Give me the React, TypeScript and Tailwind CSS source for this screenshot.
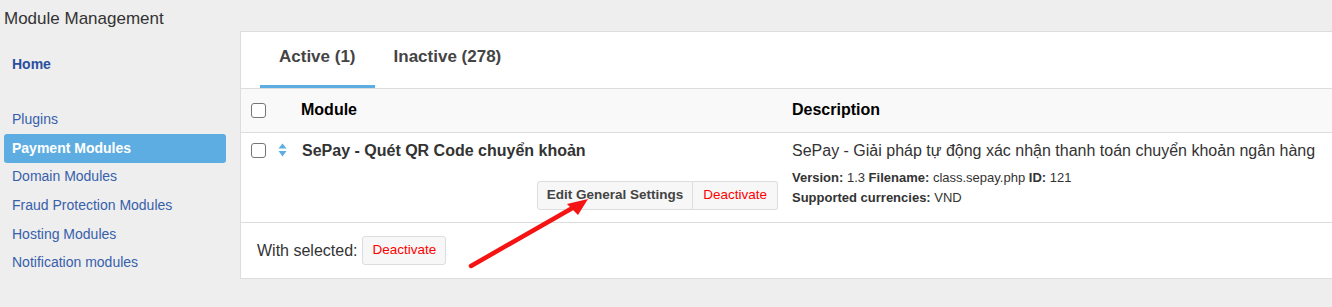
import React from "react";

function Checkbox() {
  return <span className="block w-[15px] h-[15px] rounded-[3px] border border-[#767676] bg-white" />;
}

function SortIcon() {
  return (
    <svg width="9" height="14" viewBox="0 0 9 14" className="block">
      <path d="M4.5 0.5 L8.5 5.5 L0.5 5.5 Z" fill="#5dade2" />
      <path d="M0.5 8 L8.5 8 L4.5 13.5 Z" fill="#5dade2" />
    </svg>
  );
}

const sideItems = [
  "Plugins",
  "Payment Modules",
  "Domain Modules",
  "Fraud Protection Modules",
  "Hosting Modules",
  "Notification modules",
];

export default function App() {
  return (
    <div
      className="relative w-[1332px] h-[307px] overflow-hidden bg-[#eeeeee] text-[#333333]"
      style={{ fontFamily: '"Liberation Sans", Arial, sans-serif' }}
    >
      <div className="pt-[8px] pl-[4px] text-[17px] leading-[22px] text-[#333333]">Module Management</div>
      <div className="flex mt-[1px]">
        {/* Sidebar */}
        <div className="w-[240px] flex-none pl-[4px] pr-[14px] pt-[19px] text-[14px]">
          <div className="h-[29px] flex items-center px-[8px] font-bold text-[#2b4f9e]">Home</div>
          <div className="h-[26px]" />
          {sideItems.map((it) => (
            <div
              key={it}
              className={
                it === "Payment Modules"
                  ? "h-[29px] flex items-center px-[8px] rounded-[3px] bg-[#5dade2] text-white font-bold"
                  : "h-[28.6px] flex items-center px-[8px] text-[#3760ab]"
              }
            >
              {it}
            </div>
          ))}
        </div>

        {/* Main panel */}
        <div className="w-[1120px] flex-none bg-white border border-[#dddddd]">
          {/* Tabs */}
          <div className="flex pl-[19px] text-[17px] font-bold text-[#444444]">
            <div className="px-[19px] pt-[15px] pb-[18px] leading-[20px] border-b-[3px] border-[#5dade2]">Active (1)</div>
            <div className="px-[19px] pt-[15px] pb-[18px] leading-[20px] border-b-[3px] border-transparent">Inactive (278)</div>
          </div>

          {/* Table header */}
          <div className="grid grid-cols-[49px_490px_1fr] h-[45px] items-center bg-[#f9f9f9] border-t border-b border-[#dddddd] text-[16px] font-bold text-black">
            <div className="pl-[10px]">
              <Checkbox />
            </div>
            <div className="pl-[11px] pb-[2px]">Module</div>
            <div className="pl-[12px] pb-[2px]">Description</div>
          </div>

          {/* Row */}
          <div className="grid grid-cols-[49px_490px_1fr] border-b border-[#dddddd] pt-[8px] pb-[12px]">
            <div className="flex items-start pl-[10px] pt-[2px] gap-[12px]">
              <Checkbox />
              <SortIcon />
            </div>
            <div className="pl-[12px] pr-[2px] flex flex-col">
              <div className="text-[16px] leading-[20px] font-bold text-[#333333]">SePay - Quét QR Code chuyển khoản</div>
              <div className="flex justify-end mt-[20px]">
                <div className="flex h-[29px] text-[13.5px]">
                  <span className="flex items-center px-[9px] border border-[#dddddd] rounded-l-[3px] bg-[#f7f7f7] font-bold text-[#444444]">
                    Edit General Settings
                  </span>
                  <span className="flex items-center px-[10px] border border-l-0 border-[#dddddd] rounded-r-[3px] bg-[#f7f7f7] text-[#ff0000]">
                    Deactivate
                  </span>
                </div>
              </div>
            </div>
            <div className="pl-[12px]">
              <div className="text-[16px] leading-[20px] text-[#333333]">
                SePay - Giải pháp tự động xác nhận thanh toán chuyển khoản ngân hàng
              </div>
              <div className="mt-[7px] text-[13px] leading-[20px] text-[#333333]">
                <b>Version:</b> 1.3 <b>Filename:</b> class.sepay.php <b>ID:</b> 121
              </div>
              <div className="text-[13px] leading-[20px] text-[#333333]">
                <b>Supported currencies:</b> VND
              </div>
            </div>
          </div>

          {/* Footer */}
          <div className="flex items-center gap-[5px] pl-[16px] pt-[13px] pb-[13px] text-[16px] text-[#333333]">
            <span>With selected:</span>
            <span className="flex items-center h-[29px] px-[9px] border border-[#dddddd] rounded-[3px] bg-[#f7f7f7] text-[13.5px] text-[#ff0000]">
              Deactivate
            </span>
          </div>
        </div>
      </div>

      {/* Red annotation arrow */}
      <svg className="absolute left-0 top-0 pointer-events-none" width="1332" height="307">
        <line x1="471" y1="266" x2="576" y2="206" stroke="#f41414" strokeWidth="4.5" strokeLinecap="round" />
        <polygon points="588,199 567,204 578,215" fill="#f41414" />
      </svg>
    </div>
  );
}
